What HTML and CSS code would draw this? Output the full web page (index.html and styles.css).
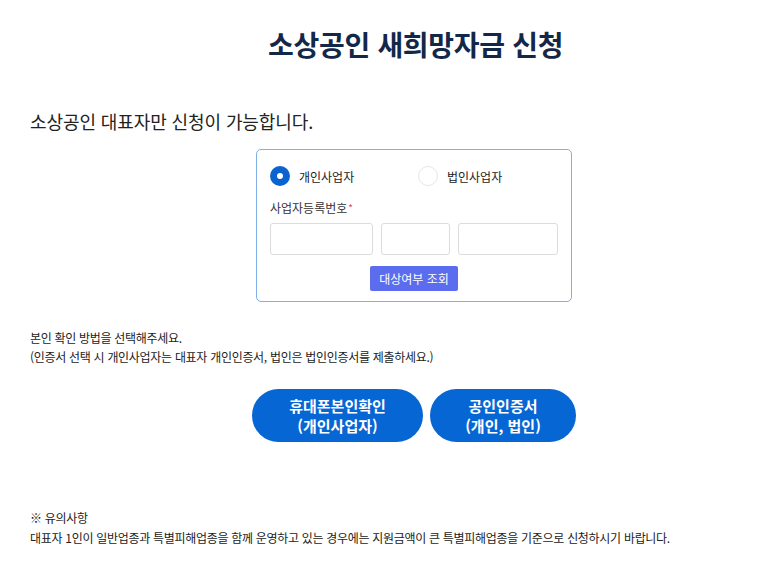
FILE: index.html
```html
<!DOCTYPE html>
<html lang="ko">
<head>
<meta charset="utf-8">
<link rel="stylesheet" href="styles.css">
</head>
<body>
<div class="page">
  <h1 class="title">소상공인 새희망자금 신청</h1>
  <p class="lead">소상공인 대표자만 신청이 가능합니다.</p>
  <div class="card-wrap">
    <div class="card">
      <div class="radios">
        <label class="radio"><span class="dot on"></span><span>개인사업자</span></label>
        <label class="radio"><span class="dot"></span><span>법인사업자</span></label>
      </div>
      <div class="field-label">사업자등록번호<span class="req">*</span></div>
      <div class="inputs">
        <span class="inp w1"></span>
        <span class="inp w2"></span>
        <span class="inp w3"></span>
      </div>
      <div class="check-row"><span class="check-btn">대상여부 조회</span></div>
    </div>
  </div>
  <p class="guide">본인 확인 방법을 선택해주세요.<br>(인증서 선택 시 개인사업자는 대표자 개인인증서, 법인은 법인인증서를 제출하세요.)</p>
  <div class="auth">
    <span class="pill p1">휴대폰본인확인<br>(개인사업자)</span>
    <span class="pill p2">공인인증서<br>(개인, 법인)</span>
  </div>
  <div class="notice">
    <div>※ 유의사항</div>
    <div>대표자 1인이 일반업종과 특별피해업종을 함께 운영하고 있는 경우에는 지원금액이 큰 특별피해업종을 기준으로 신청하시기 바랍니다.</div>
  </div>
</div>
</body>
</html>
```

FILE: styles.css
```css
* { box-sizing: border-box; }
html, body { margin: 0; padding: 0; background: #fff; }
body {
  font-family: "Noto Sans CJK KR", "Noto Sans", sans-serif;
  color: #222;
}
.page { padding: 0 0 0 30px; width: 780px; }
.title {
  margin: 0;
  padding-top: 24px;
  padding-left: 238px;
  font-size: 28px;
  font-weight: 700;
  color: #132849;
  line-height: 40px;
  letter-spacing: -0.3px;
}
.lead {
  margin: 44px 0 0 0;
  font-size: 18px;
  line-height: 26px;
  color: #222;
  letter-spacing: -0.1px;
}
.card-wrap { padding-left: 226px; margin-top: 15px; }
.card {
  width: 316px;
  height: 153px;
  border: 1px solid #7fb0e6;
  border-radius: 5px;
  padding: 16px 0 0 13px;
}
.radios { display: flex; }
.radio {
  display: flex;
  align-items: center;
  gap: 9px;
  font-size: 12px;
  color: #222;
  width: 148px;
}
.radio + .radio { width: auto; }
.dot {
  width: 20px; height: 20px;
  border-radius: 50%;
  border: 1px solid #e6e6e6;
  background: #fff;
  flex: none;
}
.dot.on {
  border: 7px solid #0a63cf;
}
.field-label {
  margin-top: 14px;
  font-size: 12px;
  line-height: 16px;
  color: #333;
}
.req { color: #e8434a; font-size: 10px; vertical-align: top; margin-left: 1px; }
.inputs { display: flex; margin-top: 7px; }
.inp {
  display: block;
  height: 32px;
  border: 1px solid #dcdcdc;
  border-radius: 3px;
}
.w1 { width: 103px; }
.w2 { width: 69px; margin-left: 8px; }
.w3 { width: 100px; margin-left: 8px; }
.check-row { padding-left: 100px; margin-top: 10px; }
.check-btn {
  display: inline-block;
  width: 88px;
  height: 25px;
  line-height: 25px;
  text-align: center;
  background: #5b6cee;
  color: #fff;
  font-size: 12px;
  border-radius: 2px;
}
.guide {
  margin: 26px 0 0 0;
  font-size: 12px;
  line-height: 19px;
  color: #222;
  letter-spacing: -0.3px;
}
.auth {
  display: flex;
  gap: 7px;
  padding-left: 222px;
  margin-top: 23px;
}
.pill {
  display: flex;
  align-items: center;
  justify-content: center;
  text-align: center;
  height: 53px;
  border-radius: 27px;
  background: #0566d4;
  color: #fff;
  font-size: 15px;
  font-weight: 700;
  line-height: 20px;
}
.p1 { width: 171px; }
.p2 { width: 146px; }
.notice {
  margin-top: 66px;
  font-size: 12px;
  line-height: 20px;
  color: #222;
  letter-spacing: -0.3px;
}
```
